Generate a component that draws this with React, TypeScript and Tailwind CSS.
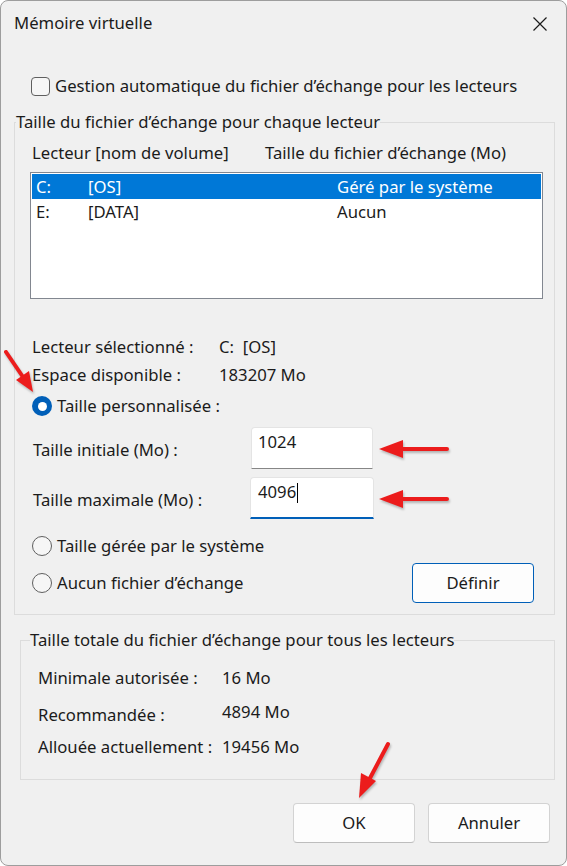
import React from 'react'

const font = { fontFamily: '"Segoe UI", "Noto Sans", sans-serif' }

function Radio({ checked = false }: { checked?: boolean }) {
  return checked ? (
    <span className="flex h-[20px] w-[20px] shrink-0 items-center justify-center rounded-full bg-[#005fb8]">
      <span className="h-[9px] w-[9px] rounded-full bg-white" />
    </span>
  ) : (
    <span className="h-[20px] w-[20px] shrink-0 rounded-full border border-[#5f5f5f] bg-[#f6f6f6]" />
  )
}

function Button({ label, primary = false }: { label: string; primary?: boolean }) {
  return (
    <button
      className={
        primary
          ? 'flex h-[40px] w-[122px] items-center justify-center rounded-[4px] border border-[#005fb8] bg-[#fdfdfd] text-[16.7px] text-[#1b1b1b]'
          : 'flex h-[40px] w-[122px] items-center justify-center rounded-[4px] border border-[#d3d3d3] border-b-[#bdbdbd] bg-[#fdfdfd] text-[16.7px] text-[#1b1b1b]'
      }
    >
      {label}
    </button>
  )
}

function Arrows() {
  // red annotation arrows drawn over the dialog
  return (
    <svg className="pointer-events-none absolute left-0 top-0" width="567" height="866">
      <g fill="#ec1c1c" stroke="#ec1c1c" style={{ filter: 'drop-shadow(1px 2px 1px rgba(0,0,0,0.25))' }}>
        <line x1="5" y1="351" x2="22" y2="376" strokeWidth="4" strokeLinecap="round" />
        <polygon points="32,391 15,379 28,370" stroke="none" />
        <line x1="446" y1="448" x2="398" y2="448" strokeWidth="4" strokeLinecap="round" />
        <polygon points="378,448 402,439 402,457" stroke="none" />
        <line x1="446" y1="498" x2="398" y2="498" strokeWidth="4" strokeLinecap="round" />
        <polygon points="378,498 402,489 402,507" stroke="none" />
        <line x1="387" y1="743" x2="368" y2="779" strokeWidth="4" strokeLinecap="round" />
        <polygon points="358,797 360,772 375,780" stroke="none" />
      </g>
    </svg>
  )
}

export default function App() {
  return (
    <div
      className="relative flex h-[866px] w-[567px] flex-col overflow-hidden rounded-[8px] border border-[#9d9d9d] bg-[#f0f0f0] text-[16.7px] leading-[20px] text-[#1b1b1b]"
      style={font}
    >
      {/* Title bar */}
      <div className="flex h-[44px] shrink-0 items-center justify-between pl-[13px] pr-[18px]">
        <span>Mémoire virtuelle</span>
        <svg width="16" height="16" viewBox="0 0 16 16" className="mt-[1px]">
          <path d="M1.5 1.5 L14.5 14.5 M14.5 1.5 L1.5 14.5" stroke="#1b1b1b" strokeWidth="1.2" />
        </svg>
      </div>

      {/* Auto manage checkbox */}
      <div className="mt-[29px] flex h-[24px] items-center gap-[5px] pl-[30px]">
        <span className="h-[19px] w-[19px] rounded-[4px] border border-[#5f5f5f] bg-[#f6f6f6]" />
        <span>Gestion automatique du fichier d’échange pour les lecteurs</span>
      </div>

      {/* Per drive group */}
      <fieldset className="ml-[13px] mt-[14px] w-[541px] border border-[#dcdcdc] pb-[11px]">
        <legend className="ml-[1px] h-[20px] leading-[20px]">Taille du fichier d’échange pour chaque lecteur</legend>

        <div className="mt-[11px] flex h-[20px] items-center pl-[17px]">
          <span className="w-[233px]">Lecteur [nom de volume]</span>
          <span>Taille du fichier d’échange (Mo)</span>
        </div>

        <div className="ml-[15px] mt-[9px] flex h-[127px] w-[513px] flex-col border border-[#828790] bg-white p-[1px]">
          <div className="flex h-[25px] items-center bg-[#0078d7] text-white">
            <span className="w-[56px] pl-[4px]">C:</span>
            <span className="w-[249px]">[OS]</span>
            <span>Géré par le système</span>
          </div>
          <div className="flex h-[25px] items-center">
            <span className="w-[56px] pl-[4px]">E:</span>
            <span className="w-[249px]">[DATA]</span>
            <span>Aucun</span>
          </div>
        </div>

        <div className="mt-[37px] flex h-[22px] items-center pl-[17px]">
          <span className="w-[187px]">Lecteur sélectionné :</span>
          <span className="whitespace-pre">C:  [OS]</span>
        </div>
        <div className="mt-[6px] flex h-[22px] items-center pl-[17px]">
          <span className="w-[187px]">Espace disponible :</span>
          <span>183207 Mo</span>
        </div>

        <div className="mt-[8px] flex h-[24px] items-center gap-[5px] pl-[17px]">
          <Radio checked />
          <span>Taille personnalisée :</span>
        </div>

        <div className="mt-[9px] flex h-[42px] items-center pl-[18px]">
          <span className="mt-[4px] w-[218px]">Taille initiale (Mo) :</span>
          <div className="flex h-[42px] w-[122px] items-start rounded-t-[4px] border border-[#e4e4e4] border-b-[#868686] bg-white pl-[6px] pt-[4px]">
            1024
          </div>
        </div>
        <div className="mt-[8px] flex h-[42px] items-center pl-[18px]">
          <span className="mt-[4px] w-[217px]">Taille maximale (Mo) :</span>
          <div className="flex h-[42px] w-[124px] items-start rounded-t-[4px] border border-[#e4e4e4] border-b-2 border-b-[#005fb8] bg-white pl-[7px] pt-[4px]">
            4096<span className="ml-[1px] mt-[1px] h-[20px] w-[1px] bg-black" />
          </div>
        </div>

        <div className="mt-[15px] flex h-[24px] items-center gap-[5px] pl-[17px]">
          <Radio />
          <span>Taille gérée par le système</span>
        </div>
        <div className="mt-[5px] flex h-[40px] items-center pl-[17px] pr-[20px]">
          <Radio />
          <span className="ml-[5px] flex-1">Aucun fichier d’échange</span>
          <Button label="Définir" primary />
        </div>
      </fieldset>

      {/* Totals group */}
      <fieldset className="ml-[19px] mt-[15px] w-[535px] border border-[#dcdcdc] pb-[21px]">
        <legend className="ml-[9px] h-[20px] leading-[20px]">Taille totale du fichier d’échange pour tous les lecteurs</legend>
        <div className="mt-[17px] flex h-[22px] items-center pl-[17px]">
          <span className="w-[184px]">Minimale autorisée :</span>
          <span>16 Mo</span>
        </div>
        <div className="mt-[15px] flex h-[22px] items-center pl-[17px]">
          <span className="w-[184px]">Recommandée :</span>
          <span className="-translate-y-[3px]">4894 Mo</span>
        </div>
        <div className="mt-[10px] flex h-[22px] items-center pl-[17px]">
          <span className="w-[184px]">Allouée actuellement :</span>
          <span>19456 Mo</span>
        </div>
      </fieldset>

      {/* Dialog buttons */}
      <div className="mt-[23px] flex justify-end gap-[13px] pr-[16px]">
        <Button label="OK" />
        <Button label="Annuler" />
      </div>

      <Arrows />
    </div>
  )
}
